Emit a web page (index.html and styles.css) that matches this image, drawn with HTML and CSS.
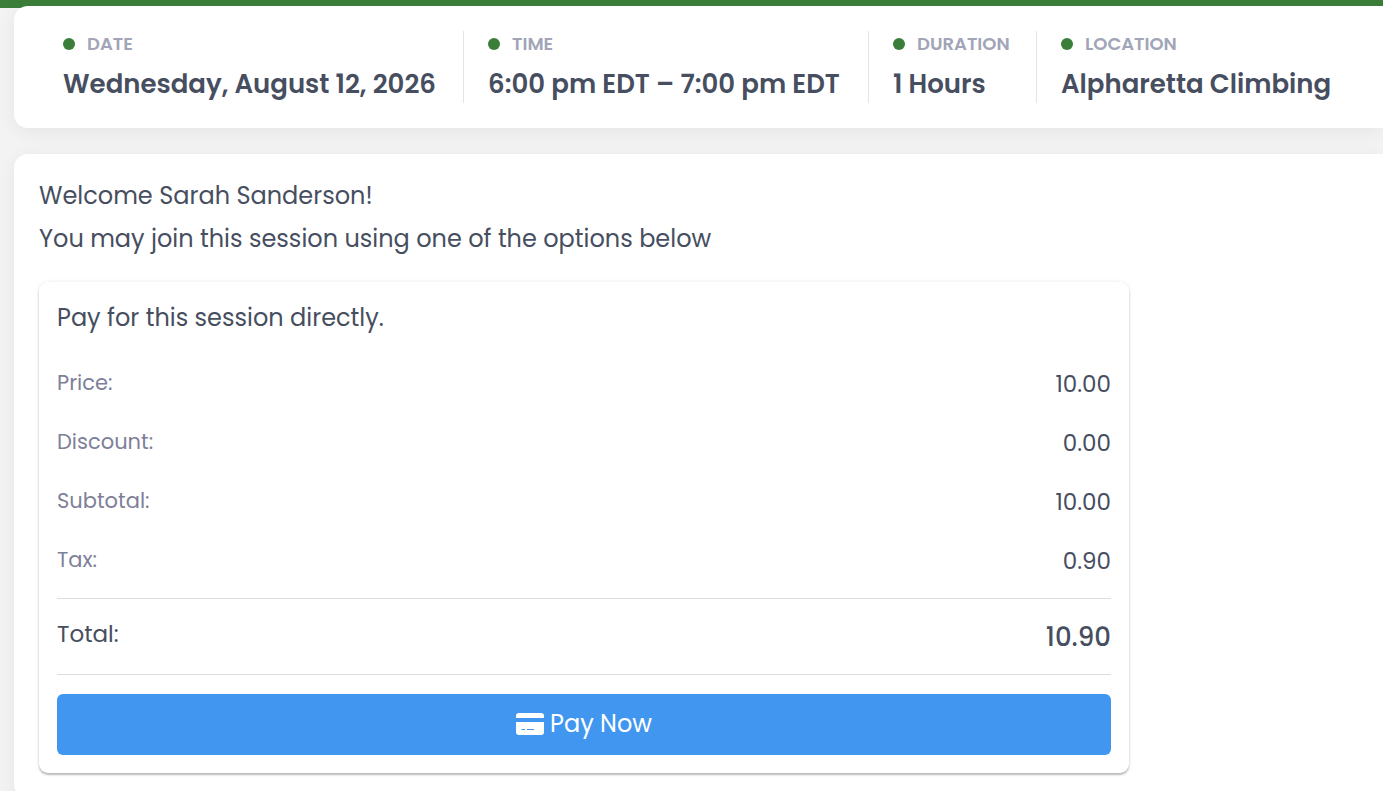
FILE: index.html
```html
<!DOCTYPE html>
<html lang="en">
<head>
<meta charset="utf-8">
<meta name="viewport" content="width=device-width, initial-scale=1">
<title>Join session</title>
<link rel="stylesheet" href="styles.css">
</head>
<body>
<header class="topbar"></header>
<main class="page">
  <section class="card details">
    <div class="detail detail-date">
      <h2 class="detail-label">DATE</h2>
      <p class="detail-value">Wednesday, August 12, 2026</p>
    </div>
    <div class="detail detail-time">
      <h2 class="detail-label">TIME</h2>
      <p class="detail-value">6:00 pm EDT – 7:00 pm EDT</p>
    </div>
    <div class="detail detail-duration">
      <h2 class="detail-label">DURATION</h2>
      <p class="detail-value">1 Hours</p>
    </div>
    <div class="detail">
      <h2 class="detail-label">LOCATION</h2>
      <p class="detail-value">Alpharetta Climbing</p>
    </div>
  </section>

  <section class="card join">
    <p class="intro">Welcome Sarah Sanderson!</p>
    <p class="intro">You may join this session using one of the options below</p>
    <div class="payment">
      <h3 class="payment-title">Pay for this session directly.</h3>
      <dl class="prices">
        <div class="row"><dt>Price:</dt><dd>10.00</dd></div>
        <div class="row"><dt>Discount:</dt><dd>0.00</dd></div>
        <div class="row"><dt>Subtotal:</dt><dd>10.00</dd></div>
        <div class="row"><dt>Tax:</dt><dd>0.90</dd></div>
        <div class="row total"><dt>Total:</dt><dd>10.90</dd></div>
      </dl>
      <button class="pay" type="button">
        <svg class="pay-icon" viewBox="0 0 28 22" aria-hidden="true">
          <path fill="#fff" d="M3 0h22a3 3 0 0 1 3 3v2H0V3a3 3 0 0 1 3-3zM0 9h28v10a3 3 0 0 1-3 3H3a3 3 0 0 1-3-3z"/>
          <path stroke="#4196f0" stroke-width="1.200" d="M5.500 16.500h3.500M11 16.500h7"/>
        </svg>
        Pay Now
      </button>
    </div>
  </section>
</main>
</body>
</html>
```
FILE: styles.css
```css
* { box-sizing: border-box; }

body {
  margin: 0;
  background: #f3f3f3;
  color: #464e5f;
  font-family: Poppins, Inter, "Open Sans", sans-serif;
  font-size: 24px;
}

h2, h3, p, dl, dd { margin: 0; font-weight: 400; }

.topbar { height: 8px; background: #3b7e3a; }

.page {
  display: flex;
  flex-direction: column;
  gap: 26px;
  margin-top: -2px;
  padding: 0 0 26px 14px;
}

.card {
  background: #fff;
  border-radius: 14px 0 0 14px;
  box-shadow: 0 4px 20px rgba(0, 0, 0, 0.06);
}

.details { display: flex; padding: 25px; }

.detail {
  display: flex;
  flex-direction: column;
  gap: 8px;
  padding: 0 24px;
  white-space: nowrap;
}

.detail + .detail { border-left: 1px solid #e4e4e8; }
.detail-date { min-width: 424px; }
.detail-time { min-width: 405px; }
.detail-duration { min-width: 168px; }

.detail-label {
  display: flex;
  align-items: center;
  gap: 12px;
  color: #a1a5b7;
  font-size: 18px;
  font-weight: 600;
  line-height: 26px;
}

.detail-label::before {
  content: "";
  width: 12px;
  height: 12px;
  border-radius: 50%;
  background: #3b7e3a;
}

.detail-value { font-size: 26px; font-weight: 600; line-height: 38px; }

.join { padding: 20px 25px 25px; }

.intro { line-height: 43px; }

.payment {
  max-width: 1090px;
  margin-top: 22px;
  padding: 18px;
  border-radius: 9px;
  box-shadow: 0 2px 2px rgba(0, 0, 0, 0.25), 0 0 4px rgba(0, 0, 0, 0.08);
}

.payment-title { font-size: 24px; line-height: 36px; }

.prices { margin: 18px 0 19px; }

.row {
  display: flex;
  align-items: flex-start;
  justify-content: space-between;
  height: 59px;
  padding-top: 12px;
  line-height: 34px;
}

.row dt { color: #7e7f99; font-size: 21px; }
.row dd { font-size: 23px; line-height: 36px; }

.total {
  height: 77px;
  margin-top: 8px;
  padding-top: 18px;
  border: solid #dedede;
  border-width: 1px 0;
}

.total dt { color: inherit; font-size: 23px; }
.total dd { font-size: 26px; font-weight: 500; line-height: 40px; }

.pay {
  display: flex;
  align-items: center;
  justify-content: center;
  gap: 6px;
  width: 100%;
  height: 61px;
  padding: 0 0 2px;
  border: 0;
  border-radius: 6px;
  background: #4196f0;
  color: #fff;
  font: inherit;
}

.pay-icon { width: 28px; height: 22px; }
```
